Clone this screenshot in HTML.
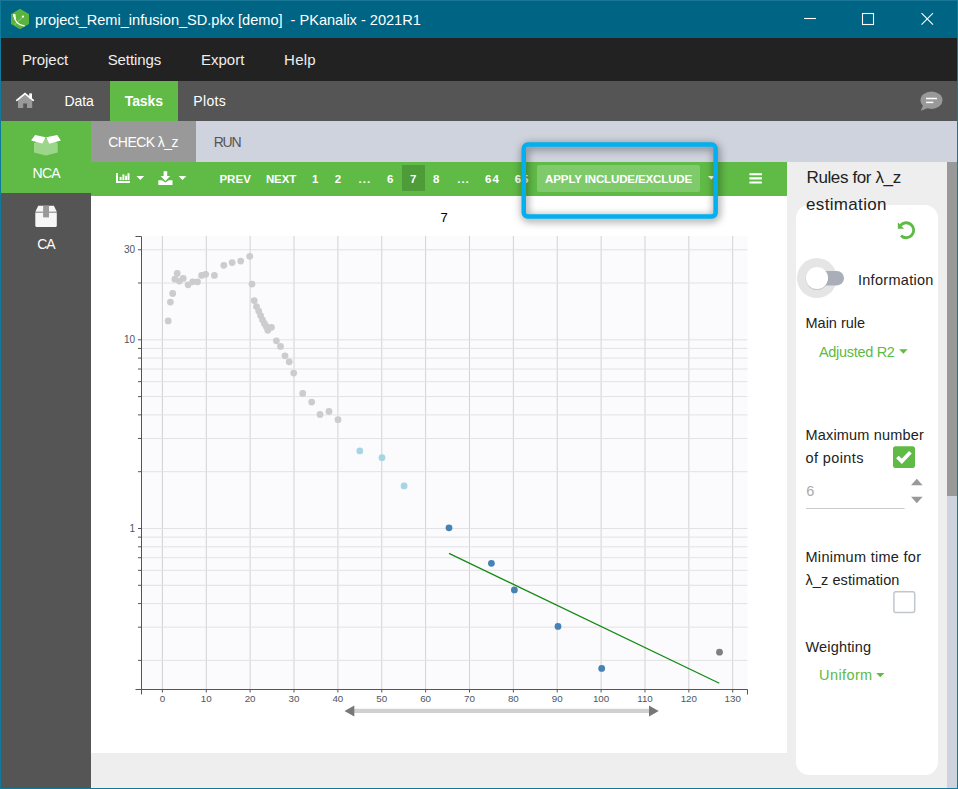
<!DOCTYPE html>
<html lang="en">
<head>
<meta charset="utf-8">
<title>PKanalix</title>
<style>
*{box-sizing:border-box;margin:0;padding:0}
html,body{width:958px;height:789px;overflow:hidden;background:#107a9a;font-family:"Liberation Sans",sans-serif;}
.abs{position:absolute}
.t{position:absolute;white-space:nowrap;line-height:1}
#win{position:absolute;left:0;top:0;width:958px;height:789px;background:#107a9a;overflow:hidden}
#titlebar{left:0;top:0;width:958px;height:38px;background:#006484;border-top:1px solid #1a7696;border-left:1px solid #107a9a;border-right:1px solid #107a9a}
#menubar{left:1px;top:38px;width:956px;height:43px;background:#222222}
#tabbar{left:1px;top:81px;width:956px;height:40px;background:#555555}
#subbar{left:91px;top:121px;width:866px;height:41px;background:#ced3dd}
#sidebar{left:1px;top:121px;width:90px;height:667px;background:#555555}
#nca{left:0;top:0;width:90px;height:72px;background:#60ba46}
#toolbar{left:91px;top:162px;width:696px;height:34px;background:#60ba46}
#main{left:91px;top:196px;width:696px;height:592px;background:#eeeeee}
#plotcard{left:0;top:0;width:696px;height:557px;background:#ffffff}
#right{left:787px;top:162px;width:160px;height:626px;background:#eeeeee}
#rcard{left:9px;top:43px;width:142px;height:570px;background:#fff;border-radius:13px}
#sbtrack{left:947px;top:162px;width:10px;height:626px;background:#ced3dd}
#sbthumb{left:0;top:0;width:10px;height:334px;background:#999999}
</style>
</head>
<body>
<div id="win">
  <div id="titlebar" class="abs"></div>
  <div id="menubar" class="abs"></div>
  <div id="tabbar" class="abs">
    <div class="abs" id="tasksbg" style="left:109px;top:0;width:68px;height:40px;background:#60ba46"></div>
  </div>
  <div id="subbar" class="abs">
    <div class="abs" id="chk" style="left:0;top:0;width:105px;height:41px;background:#999999"></div>
  </div>
  <div id="sidebar" class="abs">
    <div id="nca" class="abs"></div>
  </div>
  <div id="toolbar" class="abs">
    <div class="abs" id="pg7" style="left:311px;top:3px;width:23px;height:26px;background:#4e9b39"></div>
    <div class="abs" id="apbg" style="left:446px;top:3px;width:163px;height:27px;background:#7fca6b;border-radius:2px"></div>
  </div>
  <div id="main" class="abs">
    <div id="plotcard" class="abs"></div>
  </div>
  <div id="right" class="abs">
    <div id="rcard" class="abs"></div>
  </div>
  <div id="sbtrack" class="abs"><div id="sbthumb" class="abs"></div></div>
<svg class="abs" style="left:0;top:0" width="958" height="789" viewBox="0 0 958 789" font-family="Liberation Sans, sans-serif">
<rect x="141.5" y="236.0" width="606.0" height="453.5" fill="#fbfbfd"/>
<line x1="162.40" y1="236.0" x2="162.40" y2="689.5" stroke="#d2d2d5" stroke-width="1"/>
<line x1="206.27" y1="236.0" x2="206.27" y2="689.5" stroke="#d2d2d5" stroke-width="1"/>
<line x1="250.14" y1="236.0" x2="250.14" y2="689.5" stroke="#d2d2d5" stroke-width="1"/>
<line x1="294.01" y1="236.0" x2="294.01" y2="689.5" stroke="#d2d2d5" stroke-width="1"/>
<line x1="337.88" y1="236.0" x2="337.88" y2="689.5" stroke="#d2d2d5" stroke-width="1"/>
<line x1="381.75" y1="236.0" x2="381.75" y2="689.5" stroke="#d2d2d5" stroke-width="1"/>
<line x1="425.62" y1="236.0" x2="425.62" y2="689.5" stroke="#d2d2d5" stroke-width="1"/>
<line x1="469.49" y1="236.0" x2="469.49" y2="689.5" stroke="#d2d2d5" stroke-width="1"/>
<line x1="513.36" y1="236.0" x2="513.36" y2="689.5" stroke="#d2d2d5" stroke-width="1"/>
<line x1="557.23" y1="236.0" x2="557.23" y2="689.5" stroke="#d2d2d5" stroke-width="1"/>
<line x1="601.10" y1="236.0" x2="601.10" y2="689.5" stroke="#d2d2d5" stroke-width="1"/>
<line x1="644.97" y1="236.0" x2="644.97" y2="689.5" stroke="#d2d2d5" stroke-width="1"/>
<line x1="688.84" y1="236.0" x2="688.84" y2="689.5" stroke="#d2d2d5" stroke-width="1"/>
<line x1="732.71" y1="236.0" x2="732.71" y2="689.5" stroke="#d2d2d5" stroke-width="1"/>
<line x1="141.5" y1="660.40" x2="747.5" y2="660.40" stroke="#e2e2e4" stroke-width="1"/>
<line x1="138.0" y1="660.40" x2="141.5" y2="660.40" stroke="#555" stroke-width="1"/>
<line x1="141.5" y1="627.17" x2="747.5" y2="627.17" stroke="#e2e2e4" stroke-width="1"/>
<line x1="138.0" y1="627.17" x2="141.5" y2="627.17" stroke="#555" stroke-width="1"/>
<line x1="141.5" y1="603.59" x2="747.5" y2="603.59" stroke="#e2e2e4" stroke-width="1"/>
<line x1="138.0" y1="603.59" x2="141.5" y2="603.59" stroke="#555" stroke-width="1"/>
<line x1="141.5" y1="585.30" x2="747.5" y2="585.30" stroke="#e2e2e4" stroke-width="1"/>
<line x1="138.0" y1="585.30" x2="141.5" y2="585.30" stroke="#555" stroke-width="1"/>
<line x1="141.5" y1="570.36" x2="747.5" y2="570.36" stroke="#e2e2e4" stroke-width="1"/>
<line x1="138.0" y1="570.36" x2="141.5" y2="570.36" stroke="#555" stroke-width="1"/>
<line x1="141.5" y1="557.73" x2="747.5" y2="557.73" stroke="#e2e2e4" stroke-width="1"/>
<line x1="138.0" y1="557.73" x2="141.5" y2="557.73" stroke="#555" stroke-width="1"/>
<line x1="141.5" y1="546.79" x2="747.5" y2="546.79" stroke="#e2e2e4" stroke-width="1"/>
<line x1="138.0" y1="546.79" x2="141.5" y2="546.79" stroke="#555" stroke-width="1"/>
<line x1="141.5" y1="537.13" x2="747.5" y2="537.13" stroke="#e2e2e4" stroke-width="1"/>
<line x1="138.0" y1="537.13" x2="141.5" y2="537.13" stroke="#555" stroke-width="1"/>
<line x1="141.5" y1="528.50" x2="747.5" y2="528.50" stroke="#e2e2e4" stroke-width="1"/>
<line x1="138.0" y1="528.50" x2="141.5" y2="528.50" stroke="#555" stroke-width="1"/>
<line x1="141.5" y1="471.70" x2="747.5" y2="471.70" stroke="#e2e2e4" stroke-width="1"/>
<line x1="138.0" y1="471.70" x2="141.5" y2="471.70" stroke="#555" stroke-width="1"/>
<line x1="141.5" y1="438.47" x2="747.5" y2="438.47" stroke="#e2e2e4" stroke-width="1"/>
<line x1="138.0" y1="438.47" x2="141.5" y2="438.47" stroke="#555" stroke-width="1"/>
<line x1="141.5" y1="414.89" x2="747.5" y2="414.89" stroke="#e2e2e4" stroke-width="1"/>
<line x1="138.0" y1="414.89" x2="141.5" y2="414.89" stroke="#555" stroke-width="1"/>
<line x1="141.5" y1="396.60" x2="747.5" y2="396.60" stroke="#e2e2e4" stroke-width="1"/>
<line x1="138.0" y1="396.60" x2="141.5" y2="396.60" stroke="#555" stroke-width="1"/>
<line x1="141.5" y1="381.66" x2="747.5" y2="381.66" stroke="#e2e2e4" stroke-width="1"/>
<line x1="138.0" y1="381.66" x2="141.5" y2="381.66" stroke="#555" stroke-width="1"/>
<line x1="141.5" y1="369.03" x2="747.5" y2="369.03" stroke="#e2e2e4" stroke-width="1"/>
<line x1="138.0" y1="369.03" x2="141.5" y2="369.03" stroke="#555" stroke-width="1"/>
<line x1="141.5" y1="358.09" x2="747.5" y2="358.09" stroke="#e2e2e4" stroke-width="1"/>
<line x1="138.0" y1="358.09" x2="141.5" y2="358.09" stroke="#555" stroke-width="1"/>
<line x1="141.5" y1="348.43" x2="747.5" y2="348.43" stroke="#e2e2e4" stroke-width="1"/>
<line x1="138.0" y1="348.43" x2="141.5" y2="348.43" stroke="#555" stroke-width="1"/>
<line x1="141.5" y1="339.80" x2="747.5" y2="339.80" stroke="#e2e2e4" stroke-width="1"/>
<line x1="138.0" y1="339.80" x2="141.5" y2="339.80" stroke="#555" stroke-width="1"/>
<line x1="141.5" y1="283.00" x2="747.5" y2="283.00" stroke="#e2e2e4" stroke-width="1"/>
<line x1="138.0" y1="283.00" x2="141.5" y2="283.00" stroke="#555" stroke-width="1"/>
<line x1="141.5" y1="249.77" x2="747.5" y2="249.77" stroke="#e2e2e4" stroke-width="1"/>
<line x1="138.0" y1="249.77" x2="141.5" y2="249.77" stroke="#555" stroke-width="1"/>
<path d="M135.5,236.5H141.5V689.5H135.5" fill="none" stroke="#555" stroke-width="1"/>
<path d="M141.5,694.5V689.5H747.5V694.5" fill="none" stroke="#555" stroke-width="1"/>
<line x1="162.40" y1="689.5" x2="162.40" y2="692.5" stroke="#555" stroke-width="1"/>
<text x="162.40" y="701.8" font-size="9.8" fill="#4d5560" text-anchor="middle">0</text>
<line x1="206.27" y1="689.5" x2="206.27" y2="692.5" stroke="#555" stroke-width="1"/>
<text x="206.27" y="701.8" font-size="9.8" fill="#4d5560" text-anchor="middle">10</text>
<line x1="250.14" y1="689.5" x2="250.14" y2="692.5" stroke="#555" stroke-width="1"/>
<text x="250.14" y="701.8" font-size="9.8" fill="#4d5560" text-anchor="middle">20</text>
<line x1="294.01" y1="689.5" x2="294.01" y2="692.5" stroke="#555" stroke-width="1"/>
<text x="294.01" y="701.8" font-size="9.8" fill="#4d5560" text-anchor="middle">30</text>
<line x1="337.88" y1="689.5" x2="337.88" y2="692.5" stroke="#555" stroke-width="1"/>
<text x="337.88" y="701.8" font-size="9.8" fill="#4d5560" text-anchor="middle">40</text>
<line x1="381.75" y1="689.5" x2="381.75" y2="692.5" stroke="#555" stroke-width="1"/>
<text x="381.75" y="701.8" font-size="9.8" fill="#4d5560" text-anchor="middle">50</text>
<line x1="425.62" y1="689.5" x2="425.62" y2="692.5" stroke="#555" stroke-width="1"/>
<text x="425.62" y="701.8" font-size="9.8" fill="#4d5560" text-anchor="middle">60</text>
<line x1="469.49" y1="689.5" x2="469.49" y2="692.5" stroke="#555" stroke-width="1"/>
<text x="469.49" y="701.8" font-size="9.8" fill="#4d5560" text-anchor="middle">70</text>
<line x1="513.36" y1="689.5" x2="513.36" y2="692.5" stroke="#555" stroke-width="1"/>
<text x="513.36" y="701.8" font-size="9.8" fill="#4d5560" text-anchor="middle">80</text>
<line x1="557.23" y1="689.5" x2="557.23" y2="692.5" stroke="#555" stroke-width="1"/>
<text x="557.23" y="701.8" font-size="9.8" fill="#4d5560" text-anchor="middle">90</text>
<line x1="601.10" y1="689.5" x2="601.10" y2="692.5" stroke="#555" stroke-width="1"/>
<text x="601.10" y="701.8" font-size="9.8" fill="#4d5560" text-anchor="middle">100</text>
<line x1="644.97" y1="689.5" x2="644.97" y2="692.5" stroke="#555" stroke-width="1"/>
<text x="644.97" y="701.8" font-size="9.8" fill="#4d5560" text-anchor="middle">110</text>
<line x1="688.84" y1="689.5" x2="688.84" y2="692.5" stroke="#555" stroke-width="1"/>
<text x="688.84" y="701.8" font-size="9.8" fill="#4d5560" text-anchor="middle">120</text>
<line x1="732.71" y1="689.5" x2="732.71" y2="692.5" stroke="#555" stroke-width="1"/>
<text x="732.71" y="701.8" font-size="9.8" fill="#4d5560" text-anchor="middle">130</text>
<text x="135.0" y="253.07" font-size="10" fill="#4d5560" text-anchor="end">30</text>
<text x="135.0" y="343.10" font-size="10" fill="#4d5560" text-anchor="end">10</text>
<text x="135.0" y="531.80" font-size="10" fill="#4d5560" text-anchor="end">1</text>
<text x="444" y="222.3" font-size="13" fill="#000" text-anchor="middle">7</text>
<circle cx="168.2" cy="320.9" r="3.4" fill="#cccccc"/>
<circle cx="170.4" cy="302.1" r="3.4" fill="#cccccc"/>
<circle cx="172.7" cy="293.5" r="3.4" fill="#cccccc"/>
<circle cx="174.9" cy="279.2" r="3.4" fill="#cccccc"/>
<circle cx="177.2" cy="273.5" r="3.4" fill="#cccccc"/>
<circle cx="179.4" cy="281.1" r="3.4" fill="#cccccc"/>
<circle cx="183.2" cy="278.4" r="3.4" fill="#cccccc"/>
<circle cx="188.1" cy="284.8" r="3.4" fill="#cccccc"/>
<circle cx="192.6" cy="281.8" r="3.4" fill="#cccccc"/>
<circle cx="197.5" cy="281.8" r="3.4" fill="#cccccc"/>
<circle cx="201.6" cy="275.4" r="3.4" fill="#cccccc"/>
<circle cx="205.7" cy="274.3" r="3.4" fill="#cccccc"/>
<circle cx="214.4" cy="275.4" r="3.4" fill="#cccccc"/>
<circle cx="223.8" cy="265.3" r="3.4" fill="#cccccc"/>
<circle cx="232.1" cy="262.6" r="3.4" fill="#cccccc"/>
<circle cx="240.7" cy="261.1" r="3.4" fill="#cccccc"/>
<circle cx="249.7" cy="256.3" r="3.4" fill="#cccccc"/>
<circle cx="252" cy="284.1" r="3.4" fill="#cccccc"/>
<circle cx="254.2" cy="300.6" r="3.4" fill="#cccccc"/>
<circle cx="256.5" cy="306.6" r="3.4" fill="#cccccc"/>
<circle cx="258.7" cy="311.1" r="3.4" fill="#cccccc"/>
<circle cx="260.6" cy="315.6" r="3.4" fill="#cccccc"/>
<circle cx="262.5" cy="319.8" r="3.4" fill="#cccccc"/>
<circle cx="264.4" cy="323.5" r="3.4" fill="#cccccc"/>
<circle cx="266.3" cy="326.5" r="3.4" fill="#cccccc"/>
<circle cx="267.8" cy="330.3" r="3.4" fill="#cccccc"/>
<circle cx="271.5" cy="327.3" r="3.4" fill="#cccccc"/>
<circle cx="276.4" cy="340.8" r="3.4" fill="#cccccc"/>
<circle cx="280.5" cy="346.4" r="3.4" fill="#cccccc"/>
<circle cx="285" cy="355.8" r="3.4" fill="#cccccc"/>
<circle cx="289.2" cy="361.8" r="3.4" fill="#cccccc"/>
<circle cx="293.7" cy="373.1" r="3.4" fill="#cccccc"/>
<circle cx="302.7" cy="393.4" r="3.4" fill="#cccccc"/>
<circle cx="311.7" cy="402.1" r="3.4" fill="#cccccc"/>
<circle cx="320" cy="414.5" r="3.4" fill="#cccccc"/>
<circle cx="329" cy="411.5" r="3.4" fill="#cccccc"/>
<circle cx="338" cy="419.7" r="3.4" fill="#cccccc"/>
<circle cx="359.8" cy="450.9" r="3.4" fill="#a8d5e5"/>
<circle cx="382" cy="457.7" r="3.4" fill="#a8d5e5"/>
<circle cx="404.1" cy="485.9" r="3.4" fill="#a8d5e5"/>
<line x1="449" y1="553.4" x2="719.3" y2="683.3" stroke="#138a13" stroke-width="1.25"/>
<circle cx="449" cy="527.8" r="3.4" fill="#4682b4"/>
<circle cx="491.4" cy="563.3" r="3.4" fill="#4682b4"/>
<circle cx="514.4" cy="589.9" r="3.4" fill="#4682b4"/>
<circle cx="558" cy="626.4" r="3.4" fill="#4682b4"/>
<circle cx="601.7" cy="668.4" r="3.4" fill="#4682b4"/>
<circle cx="719.5" cy="652.2" r="3.4" fill="#808080"/>
<rect x="353" y="708.8" width="297" height="4.2" fill="#d0d0d0"/>
<path d="M344.5,711 L354.3,705.6 V716.4 Z" fill="#777"/>
<path d="M658.7,711 L649,705.6 V716.4 Z" fill="#777"/>
</svg>
<svg class="abs" style="left:0;top:0" width="958" height="789" viewBox="0 0 958 789">
  <!-- app icon -->
  <g id="appicon">
    <polygon points="20,8.8 29,13.9 29,24.1 20,29.2 11,24.1 11,13.9" fill="#5bb33f"/>
    <path d="M13.8,14.8 C14.4,20.5 17,25 24.2,25.9" fill="none" stroke="#ffffff" stroke-width="1.3" stroke-linecap="round"/>
    <path d="M13,14.6 L15.4,13.9 L15.9,19.5 L14.4,19 Z" fill="#ffffff"/>
    <line x1="15.2" y1="24.4" x2="22.6" y2="17" stroke="#e8f6e2" stroke-width="0.7" stroke-dasharray="1.2 0.6"/>
    <circle cx="23" cy="16.6" r="1.1" fill="#ffffff"/>
  </g>
  <!-- window controls -->
  <g id="winctl" stroke="#ffffff" stroke-width="1.1" fill="none">
    <line x1="804" y1="18.5" x2="816" y2="18.5"/>
    <rect x="862.5" y="13.5" width="11" height="11"/>
    <path d="M921.5,13.2 L933,24.7 M933,13.2 L921.5,24.7"/>
  </g>
  <!-- home -->
  <g id="home">
    <path d="M18,99.5 L25,94.2 L32.2,99.5 V108 H27 V103.6 H23.2 V108 H18 Z" fill="#999999"/>
    <rect x="29.2" y="93.4" width="2.8" height="5" fill="#ffffff"/>
    <path d="M16.7,100.3 L25,93.5 L33.3,100.3" fill="none" stroke="#ffffff" stroke-width="1.7" stroke-linecap="round" stroke-linejoin="miter"/>
  </g>
  <!-- chat -->
  <g id="chat">
    <ellipse cx="931.5" cy="100.2" rx="11" ry="8.7" fill="#999999"/>
    <path d="M923.2,105 L920.8,110.8 L927.5,108.2 Z" fill="#999999"/>
    <line x1="926" y1="98.5" x2="937" y2="98.5" stroke="#ffffff" stroke-width="1.5"/>
    <line x1="926" y1="102.4" x2="933.3" y2="102.4" stroke="#ffffff" stroke-width="1.5"/>
  </g>
  <!-- NCA open box -->
  <g id="ncaicon">
    <path d="M34,143 L45.9,138.6 L57.7,143 V152.4 L45.9,155.6 L34,152.4 Z" fill="#9cd68b"/>
    <polygon points="31.1,140.4 35.1,135.1 45.7,137.3 42.2,143.6" fill="#ffffff"/>
    <polygon points="46.2,137.3 57.3,135.1 60.8,140.4 49.3,143.7" fill="#ffffff"/>
  </g>
  <!-- CA closed box -->
  <g id="caicon">
    <path d="M38.2,205.8 H53.9 L56.8,211.7 H35.3 Z" fill="#f6f6f6"/>
    <path d="M35.3,212.6 H56.8 V225.5 Q56.8,227 55.3,227 H36.8 Q35.3,227 35.3,225.5 Z" fill="#f6f6f6"/>
    <rect x="43.1" y="205.8" width="5.9" height="11.6" fill="#999999"/>
  </g>
  <!-- toolbar icons -->
  <g id="tbicons" fill="#ffffff">
    <path d="M116,172.9 h2 v8 h12 v2 h-14 Z"/>
    <rect x="119.6" y="176.9" width="2" height="3.2"/>
    <rect x="122.4" y="174.4" width="2" height="5.7"/>
    <rect x="125.2" y="175.7" width="1.9" height="4.4"/>
    <rect x="127.5" y="173.2" width="2" height="6.9"/>
    <path d="M136.4,176 h7.8 l-3.9,4.1 Z"/>
    <path d="M163.6,171.3 h3.6 v4.7 h3 l-4.8,4.9 l-4.8,-4.9 h3 Z"/>
    <path d="M158.3,180.2 h3.6 l3.5,2.4 l3.5,-2.4 h3.6 v4.8 h-14.2 Z"/>
    <path d="M178.6,176 h7.8 l-3.9,4.1 Z"/>
    <path d="M708,176 h6.8 l-3.4,3.6 Z"/>
    <rect x="749.3" y="173.2" width="12.7" height="2.1" rx="0.6"/>
    <rect x="749.3" y="177.3" width="12.7" height="2.1" rx="0.6"/>
    <rect x="749.3" y="181.4" width="12.7" height="2.1" rx="0.6"/>
  </g>
  <!-- refresh -->
  <g id="refresh">
    <path d="M900.45,225.4 A7.5,7.5 0 1 1 901,235.6" fill="none" stroke="#60ba46" stroke-width="2.85"/>
    <path d="M897.8,222.2 V228.8 H904.1 Z" fill="#60ba46"/>
  </g>
  <!-- toggle -->
  <g id="toggle">
    <circle cx="816.9" cy="278.1" r="20" fill="#000000" fill-opacity="0.1"/>
    <rect x="810" y="271" width="34" height="14.4" rx="7.2" fill="#a9aeb9"/>
    <circle cx="817" cy="278.6" r="11.4" fill="#000000" fill-opacity="0.12"/>
    <circle cx="817" cy="278" r="11.1" fill="#ffffff"/>
  </g>
  <!-- carets right panel -->
  <path d="M899.2,349.3 h8.4 l-4.2,4.4 Z" fill="#60ba46"/>
  <path d="M876.2,673 h8.2 l-4.1,4.3 Z" fill="#60ba46"/>
  <!-- checkbox checked -->
  <rect x="893" y="446.3" width="22" height="21.7" rx="2.5" fill="#60ba46"/>
  <path d="M897.4,457 L901.8,461.3 L910.4,452.3" fill="none" stroke="#ffffff" stroke-width="3.8"/>
  <!-- spinner -->
  <path d="M911,485.2 L916.8,478.8 L922.6,485.2 Z" fill="#999999"/>
  <path d="M911,496.8 L916.8,503.2 L922.6,496.8 Z" fill="#999999"/>
  <line x1="806" y1="508.5" x2="904.6" y2="508.5" stroke="#cccccc" stroke-width="1"/>
  <!-- checkbox empty -->
  <rect x="893.9" y="591.8" width="20.8" height="20.6" rx="2" fill="#ffffff" stroke="#c2c6ce" stroke-width="1.5"/>
</svg>

<div id="ttl" class="t" style="left:35.0px;top:13px;font-size:14.6px;color:#ffffff;letter-spacing:-0.02px;">project_Remi_infusion_SD.pkx [demo]&nbsp; - PKanalix - 2021R1</div>
<div id="m1" class="t" style="left:21.9px;top:52px;font-size:15px;color:#eeeeee;letter-spacing:-0.05px;">Project</div>
<div id="m2" class="t" style="left:107.7px;top:52px;font-size:15px;color:#eeeeee;letter-spacing:-0.09px;">Settings</div>
<div id="m3" class="t" style="left:201.1px;top:52px;font-size:15px;color:#eeeeee;letter-spacing:-0.03px;">Export</div>
<div id="m4" class="t" style="left:284.1px;top:52px;font-size:15px;color:#eeeeee;letter-spacing:0.21px;">Help</div>
<div id="t1" class="t" style="left:64.4px;top:94px;font-size:14px;color:#ffffff;letter-spacing:-0.06px;">Data</div>
<div id="t2" class="t" style="left:124.8px;top:94px;font-size:14px;color:#ffffff;font-weight:700;letter-spacing:-0.12px;">Tasks</div>
<div id="t3" class="t" style="left:193.3px;top:94px;font-size:14px;color:#ffffff;letter-spacing:0.34px;">Plots</div>
<div id="s1" class="t" style="left:108.3px;top:135px;font-size:14px;color:#ffffff;letter-spacing:-0.56px;">CHECK λ_z</div>
<div id="s2" class="t" style="left:213.7px;top:135px;font-size:14px;color:#555555;letter-spacing:-1.20px;">RUN</div>
<div id="ncal" class="t" style="left:32.5px;top:166px;font-size:14px;color:#ffffff;letter-spacing:-0.68px;">NCA</div>
<div id="cal" class="t" style="left:37.3px;top:237px;font-size:14px;color:#ffffff;letter-spacing:-1.20px;">CA</div>
<div id="b1" class="t" style="left:219.4px;top:174px;font-size:11.5px;color:#ffffff;font-weight:700;letter-spacing:0.06px;">PREV</div>
<div id="b2" class="t" style="left:265.9px;top:174px;font-size:11.5px;color:#ffffff;font-weight:700;letter-spacing:-0.09px;">NEXT</div>
<div id="p1" class="t" style="left:312.0px;top:174px;font-size:11.5px;color:#ffffff;font-weight:700;">1</div>
<div id="p2" class="t" style="left:334.7px;top:174px;font-size:11.5px;color:#ffffff;font-weight:700;">2</div>
<div id="p3" class="t" style="left:358.5px;top:174px;font-size:11.5px;color:#ffffff;font-weight:700;letter-spacing:1.00px;">...</div>
<div id="p4" class="t" style="left:386.9px;top:174px;font-size:11.5px;color:#ffffff;font-weight:700;">6</div>
<div id="p5" class="t" style="left:409.9px;top:174px;font-size:11.5px;color:#ffffff;font-weight:700;">7</div>
<div id="p6" class="t" style="left:433.0px;top:174px;font-size:11.5px;color:#ffffff;font-weight:700;">8</div>
<div id="p7" class="t" style="left:457.2px;top:174px;font-size:11.5px;color:#ffffff;font-weight:700;letter-spacing:1.00px;">...</div>
<div id="p8" class="t" style="left:485.0px;top:174px;font-size:11.5px;color:#ffffff;font-weight:700;letter-spacing:1.00px;">64</div>
<div id="p9" class="t" style="left:514.7px;top:174px;font-size:11.5px;color:#ffffff;font-weight:700;letter-spacing:1.00px;">65</div>
<div id="ap" class="t" style="left:545.1px;top:174px;font-size:11.5px;color:#ffffff;font-weight:700;letter-spacing:-0.12px;">APPLY INCLUDE/EXCLUDE</div>
<div id="r1" class="t" style="left:806.5px;top:169px;font-size:17px;color:#222222;letter-spacing:-0.38px;">Rules for λ_z</div>
<div id="r2" class="t" style="left:806.0px;top:196px;font-size:17px;color:#222222;letter-spacing:0.34px;">estimation</div>
<div id="r3" class="t" style="left:857.9px;top:273px;font-size:14.5px;color:#222222;letter-spacing:0.30px;">Information</div>
<div id="r4" class="t" style="left:805.5px;top:316px;font-size:14.5px;color:#222222;">Main rule</div>
<div id="r5" class="t" style="left:818.9px;top:345px;font-size:14.5px;color:#60ba46;letter-spacing:-0.30px;">Adjusted R2</div>
<div id="r6" class="t" style="left:805.5px;top:428px;font-size:14.5px;color:#222222;letter-spacing:0.17px;">Maximum number</div>
<div id="r7" class="t" style="left:805.5px;top:451px;font-size:14.5px;color:#222222;letter-spacing:0.40px;">of points</div>
<div id="r8" class="t" style="left:806.2px;top:484px;font-size:14.5px;color:#aaaaaa;">6</div>
<div id="r9" class="t" style="left:805.5px;top:550px;font-size:14.5px;color:#222222;letter-spacing:0.29px;">Minimum time for</div>
<div id="r10" class="t" style="left:805.5px;top:573px;font-size:14.5px;color:#222222;letter-spacing:0.09px;">λ_z estimation</div>
<div id="r11" class="t" style="left:805.5px;top:640px;font-size:14.5px;color:#222222;letter-spacing:0.16px;">Weighting</div>
<div id="r12" class="t" style="left:819.1px;top:668px;font-size:14.5px;color:#60ba46;letter-spacing:0.39px;">Uniform</div>
  <svg id="hl" class="abs" style="left:0;top:0;filter:drop-shadow(1.5px 2px 4.5px rgba(0,0,0,.55))" width="958" height="789" viewBox="0 0 958 789"><rect x="523.75" y="144.55" width="191.9" height="72.05" rx="4" fill="none" stroke="#00b0f0" stroke-width="4.5"/></svg>
</div>
</body>
</html>
